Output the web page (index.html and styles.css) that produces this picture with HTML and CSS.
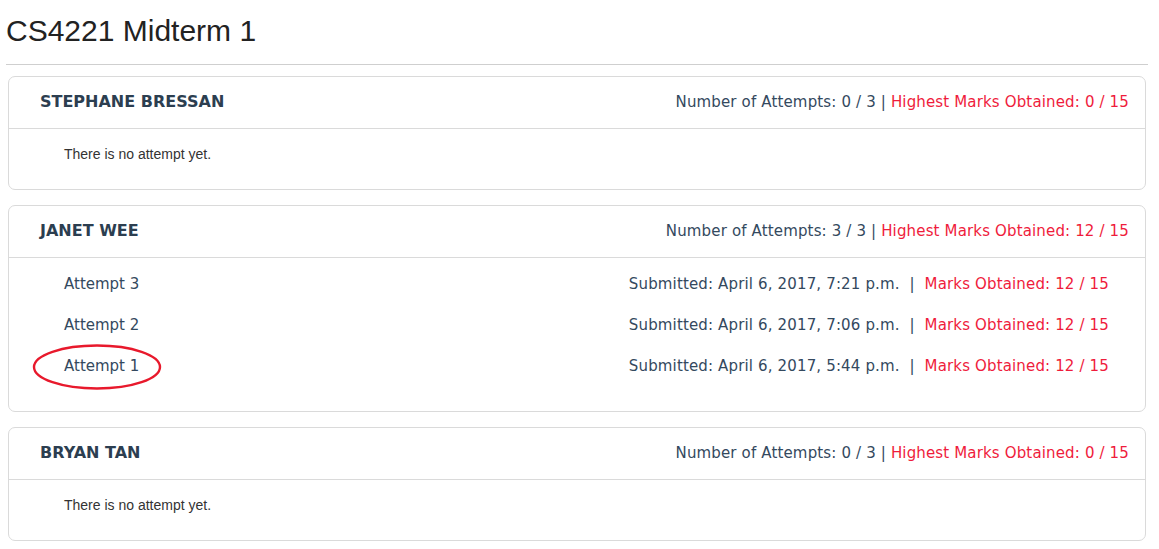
FILE: index.html
```html
<!DOCTYPE html>
<html>
<head>
<meta charset="utf-8">
<link rel="stylesheet" href="styles.css">
</head>
<body>
<div class="page">
  <h1 class="title">CS4221 Midterm 1</h1>
  <hr class="rule">
  <div class="card">
    <div class="card-head">
      <div class="name">STEPHANE BRESSAN</div>
      <div class="stats">Number of Attempts: 0 / 3 | <span class="red">Highest Marks Obtained: 0 / 15</span></div>
    </div>
    <div class="card-body empty">There is no attempt yet.</div>
  </div>
  <div class="card">
    <div class="card-head">
      <div class="name">JANET WEE</div>
      <div class="stats">Number of Attempts: 3 / 3 | <span class="red">Highest Marks Obtained: 12 / 15</span></div>
    </div>
    <div class="card-body attempts">
      <div class="row">
        <div class="label">Attempt 3</div>
        <div class="info">Submitted: April 6, 2017, 7:21 p.m. &nbsp;|&nbsp; <span class="red">Marks Obtained: 12 / 15</span></div>
      </div>
      <div class="row">
        <div class="label">Attempt 2</div>
        <div class="info">Submitted: April 6, 2017, 7:06 p.m. &nbsp;|&nbsp; <span class="red">Marks Obtained: 12 / 15</span></div>
      </div>
      <div class="row">
        <div class="label circled">Attempt 1
          <svg class="ring" width="130" height="48" viewBox="0 0 130 48"><ellipse cx="65" cy="24" rx="63" ry="21.5" fill="none" stroke="#e8192c" stroke-width="2.4"/></svg>
        </div>
        <div class="info">Submitted: April 6, 2017, 5:44 p.m. &nbsp;|&nbsp; <span class="red">Marks Obtained: 12 / 15</span></div>
      </div>
    </div>
  </div>
  <div class="card">
    <div class="card-head">
      <div class="name">BRYAN TAN</div>
      <div class="stats">Number of Attempts: 0 / 3 | <span class="red">Highest Marks Obtained: 0 / 15</span></div>
    </div>
    <div class="card-body empty">There is no attempt yet.</div>
  </div>
</div>
</body>
</html>
```

FILE: styles.css
```css
* { box-sizing: border-box; }
html, body { margin: 0; padding: 0; background: #fff; }
.page {
  padding: 14px 11px 0 6px;
  font-family: "DejaVu Sans", Verdana, sans-serif;
  color: #34495e;
}
.title {
  margin: 0;
  font-family: "Liberation Sans", Arial, sans-serif;
  font-weight: normal;
  font-size: 30px;
  line-height: 33px;
  color: #222;
}
.rule {
  margin: 17px 0 11px 0;
  border: 0;
  border-top: 1px solid #cfcfcf;
  height: 0;
}
.card {
  margin: 0 2px 15px 2px;
  border: 1px solid #dadada;
  border-radius: 7px;
  background: #fff;
}
.card-head {
  height: 52px;
  border-bottom: 1px solid #dadada;
  display: flex;
  align-items: center;
  justify-content: space-between;
  padding: 0 16px 2px 31px;
}
.name {
  font-weight: bold;
  font-size: 16px;
  color: #2c3e50;
}
.stats {
  font-size: 15px;
  color: #34495e;
  letter-spacing: 0.15px;
}
.red { color: #ef1c3c; }
.card-body.empty {
  font-family: "Liberation Sans", Arial, sans-serif;
  font-size: 14px;
  line-height: 20px;
  color: #333;
  padding: 15px 55px 25px 55px;
}
.card-body.attempts {
  padding: 5px 36px 25px 55px;
}
.row {
  height: 41px;
  display: flex;
  align-items: center;
  justify-content: space-between;
  font-size: 15px;
}
.info { letter-spacing: 0.15px; }
.label { position: relative; }
.ring {
  position: absolute;
  left: -32px;
  top: -14px;
}
```
